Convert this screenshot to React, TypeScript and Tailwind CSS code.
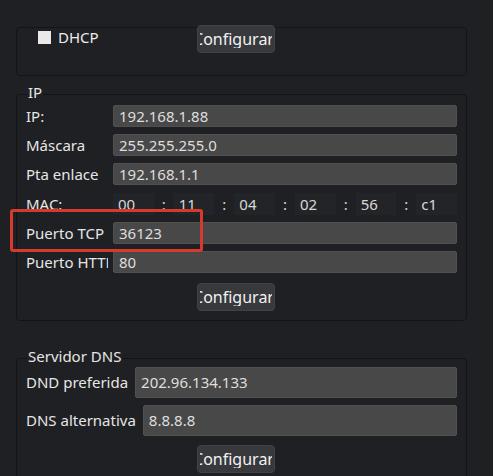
const font = { fontFamily: '"Noto Sans", "Liberation Sans", sans-serif' };

function ConfigButton() {
  return (
    <div className="flex h-[28px] w-[78px] shrink-0 items-center rounded-[4px] border border-[#414246] bg-[#38393d] px-[2px] text-[16px] leading-none text-[#f2f2f2]">
      <div className="flex w-full justify-center overflow-hidden whitespace-nowrap">
        <span className="pb-[1px] pr-[5px]">Configurar</span>
      </div>
    </div>
  );
}

function Field({ value }: { value: string }) {
  return (
    <div className="flex flex-1 items-center rounded-[2px] border border-[#505050] bg-[#484848] pl-[5px] text-[#dedede]">
      {value}
    </div>
  );
}

function IpRow({ label, value }: { label: string; value: string }) {
  return (
    <div className="flex h-[22px] items-stretch">
      <div className="mr-[5px] flex w-[82px] shrink-0 items-center overflow-hidden whitespace-nowrap">{label}</div>
      <Field value={value} />
    </div>
  );
}

const mac = ["00", "11", "04", "02", "56", "c1"];

export default function App() {
  return (
    <div
      className="relative h-[476px] w-[493px] overflow-hidden bg-[#1f2023] pl-[16px] pr-[26px] text-[15px] leading-none text-[#e6e6e6]"
      style={font}
    >
      {/* DHCP */}
      <div className="mt-[27px] h-[49px] rounded-[4px] border border-[#131417]">
        <div className="flex items-start">
          <div className="flex w-[180px] items-center gap-[7px] pl-[21px] pt-[2px]">
            <div className="h-[13px] w-[13px] bg-[#e9e9e9]" />
            <span className="text-[#ececec]">DHCP</span>
          </div>
          <div className="-mt-[3px]">
            <ConfigButton />
          </div>
        </div>
      </div>

      {/* IP */}
      <fieldset className="mt-[8px] rounded-[4px] border border-[#131417]">
        <legend className="ml-[10px] px-[1px] pb-[5px] leading-[16px]">IP</legend>
        <div className="flex flex-col px-[9px] pb-[9px]">
          <div className="flex flex-col gap-[7px]">
            <IpRow label="IP:" value="192.168.1.88" />
            <IpRow label="Máscara" value="255.255.255.0" />
            <IpRow label="Pta enlace" value="192.168.1.1" />
            <div className="mt-[1px] flex h-[22px] items-stretch">
              <div className="flex w-[87px] shrink-0 items-center">MAC:</div>
              {mac.map((m, i) => (
                <div key={m} className={`flex items-stretch ${i > 0 ? "flex-[1_1_60px]" : "flex-[1_1_40px]"}`}>
                  {i > 0 && (
                    <div className="flex w-[20px] shrink-0 items-center justify-center text-[#d8d8d8]">:</div>
                  )}
                  <div className="flex flex-1 items-center bg-[#232428] pl-[5px] text-[#d8d8d8]">{m}</div>
                </div>
              ))}
            </div>
            <IpRow label="Puerto TCP" value="36123" />
            <IpRow label="Puerto HTTP" value="80" />
          </div>
          <div className="mt-[10px] flex pl-[171px]">
            <ConfigButton />
          </div>
        </div>
      </fieldset>

      {/* DNS */}
      <fieldset className="mt-[27px] rounded-[4px] border border-[#131417]">
        <legend className="ml-[10px] px-[1px] pb-[5px] leading-[16px]">Servidor DNS</legend>
        <div className="-mt-[2px] flex flex-col px-[9px] pb-[9px]">
          <div className="flex flex-col gap-[7px]">
            <div className="flex h-[31px] items-stretch gap-[7px]">
              <div className="flex items-center whitespace-nowrap">DND preferida</div>
              <Field value="202.96.134.133" />
            </div>
            <div className="flex h-[31px] items-stretch gap-[7px]">
              <div className="flex items-center whitespace-nowrap">DNS alternativa</div>
              <Field value="8.8.8.8" />
            </div>
          </div>
          <div className="mt-[9px] flex pl-[171px]">
            <ConfigButton />
          </div>
        </div>
      </fieldset>

      {/* highlight */}
      <div className="absolute left-[10px] top-[209px] h-[43px] w-[193px] rounded-[3px] border-[3px] border-[#d63a2c]" />
    </div>
  );
}
